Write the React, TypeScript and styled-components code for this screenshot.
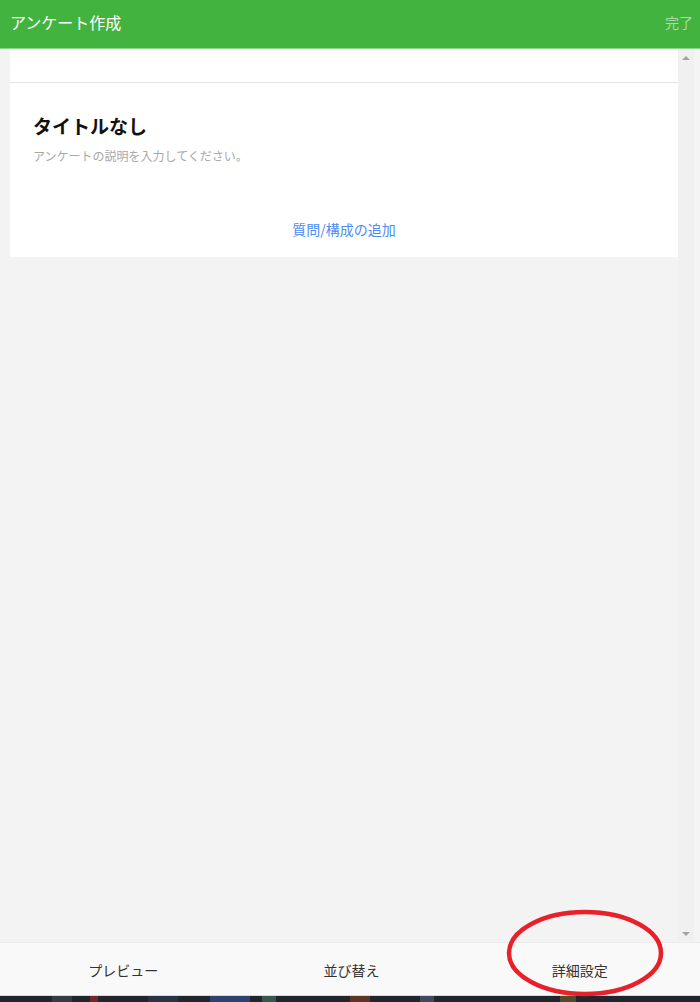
import React from 'react';
import styled, { createGlobalStyle } from 'styled-components';

const GlobalStyle = createGlobalStyle`
  html, body {
    margin: 0;
    padding: 0;
    background: #f3f3f3;
  }
  body {
    font-family: 'Noto Sans CJK JP', 'Noto Sans', sans-serif;
  }
`;

const TABS = ['プレビュー', '並び替え', '詳細設定'];

const TASKBAR_CHIPS = [
  { left: 52, width: 20, color: '#363a44' },
  { left: 90, width: 8, color: '#6e2a2a' },
  { left: 148, width: 30, color: '#2a3344' },
  { left: 210, width: 40, color: '#2c4270' },
  { left: 262, width: 14, color: '#34584a' },
  { left: 350, width: 20, color: '#5e3328' },
  { left: 420, width: 14, color: '#3f4a60' },
  { left: 560, width: 16, color: '#554a28' },
];

const App = () => (
  <Page>
    <GlobalStyle />
    <Header>
      <HeaderTitle>アンケート作成</HeaderTitle>
      <DoneButton>完了</DoneButton>
    </Header>

    <Main>
      <ScrollArea>
        <Card>
          <CardTop />
          <CardBody>
            <Title>タイトルなし</Title>
            <Description>アンケートの説明を入力してください。</Description>
            <AddLink>質問/構成の追加</AddLink>
          </CardBody>
        </Card>
      </ScrollArea>
      <Scrollbar>
        <ArrowUp />
        <ArrowDown />
      </Scrollbar>
      <Gutter />
    </Main>

    <BottomBar>
      {TABS.map((label) => (
        <Tab key={label}>{label}</Tab>
      ))}
    </BottomBar>

    <Taskbar>
      {TASKBAR_CHIPS.map((c) => (
        <TaskChip
          key={c.left}
          style={{ left: c.left, width: c.width, background: c.color }}
        />
      ))}
    </Taskbar>

    <Annotation width="700" height="1002" viewBox="0 0 700 1002">
      <ellipse
        cx="585"
        cy="953"
        rx="76"
        ry="41"
        fill="none"
        stroke="#e8202a"
        strokeWidth="4.5"
      />
    </Annotation>
  </Page>
);

export default App;

const Page = styled.div`
  position: relative;
  display: flex;
  flex-direction: column;
  width: 700px;
  height: 1002px;
  background: #f3f3f3;
  overflow: hidden;
`;

const Header = styled.div`
  display: flex;
  align-items: center;
  justify-content: space-between;
  height: 48px;
  padding: 0 7px 0 10px;
  background: #43b33f;
  border-bottom: 1px solid #8fd38c;
`;

const HeaderTitle = styled.div`
  color: #fff;
  font-size: 16px;
  line-height: 20px;
  margin-top: -4px;
`;

const DoneButton = styled.div`
  color: #a8dba5;
  font-size: 14px;
  line-height: 20px;
  margin-top: -4px;
`;

const Main = styled.div`
  display: flex;
  flex: 1;
  min-height: 0;
`;

const ScrollArea = styled.div`
  flex: 1;
  padding-left: 10px;
`;

const Card = styled.div`
  background: #fff;
`;

const CardTop = styled.div`
  height: 33px;
  border-bottom: 1px solid #e4e4e4;
`;

const CardBody = styled.div`
  display: flex;
  flex-direction: column;
  padding: 30px 23px 18px;
`;

const Title = styled.div`
  font-size: 19px;
  font-weight: bold;
  line-height: 26px;
  color: #111;
`;

const Description = styled.div`
  margin-top: 8px;
  font-size: 12px;
  line-height: 18px;
  color: #a8a8a8;
`;

const AddLink = styled.div`
  margin-top: 54px;
  align-self: center;
  font-size: 14px;
  line-height: 20px;
  color: #4e8cf2;
  cursor: pointer;
`;

const Scrollbar = styled.div`
  display: flex;
  flex-direction: column;
  justify-content: space-between;
  align-items: center;
  width: 16px;
  padding: 7px 0 6px;
  background: #f0f0f0;
`;

const ArrowUp = styled.div`
  width: 0;
  height: 0;
  border-left: 4px solid transparent;
  border-right: 4px solid transparent;
  border-bottom: 4px solid #a3a3a3;
`;

const ArrowDown = styled.div`
  width: 0;
  height: 0;
  border-left: 4px solid transparent;
  border-right: 4px solid transparent;
  border-top: 4px solid #a3a3a3;
`;

const Gutter = styled.div`
  width: 6px;
  background: #f4f4f4;
`;

const BottomBar = styled.div`
  display: grid;
  grid-template-columns: repeat(3, 1fr);
  align-items: center;
  height: 52px;
  padding: 0 6px 0 9px;
  background: #f9f9f9;
  border-top: 1px solid #ececec;
`;

const Tab = styled.div`
  text-align: center;
  font-size: 14px;
  color: #333;
  padding-top: 1px;
`;

const Taskbar = styled.div`
  position: relative;
  height: 6px;
  background: #22252b;
  border-top: 1px solid #d9d9d9;
`;

const TaskChip = styled.div`
  position: absolute;
  top: 0;
  bottom: 0;
`;

const Annotation = styled.svg`
  position: absolute;
  left: 0;
  top: 0;
  pointer-events: none;
`;
